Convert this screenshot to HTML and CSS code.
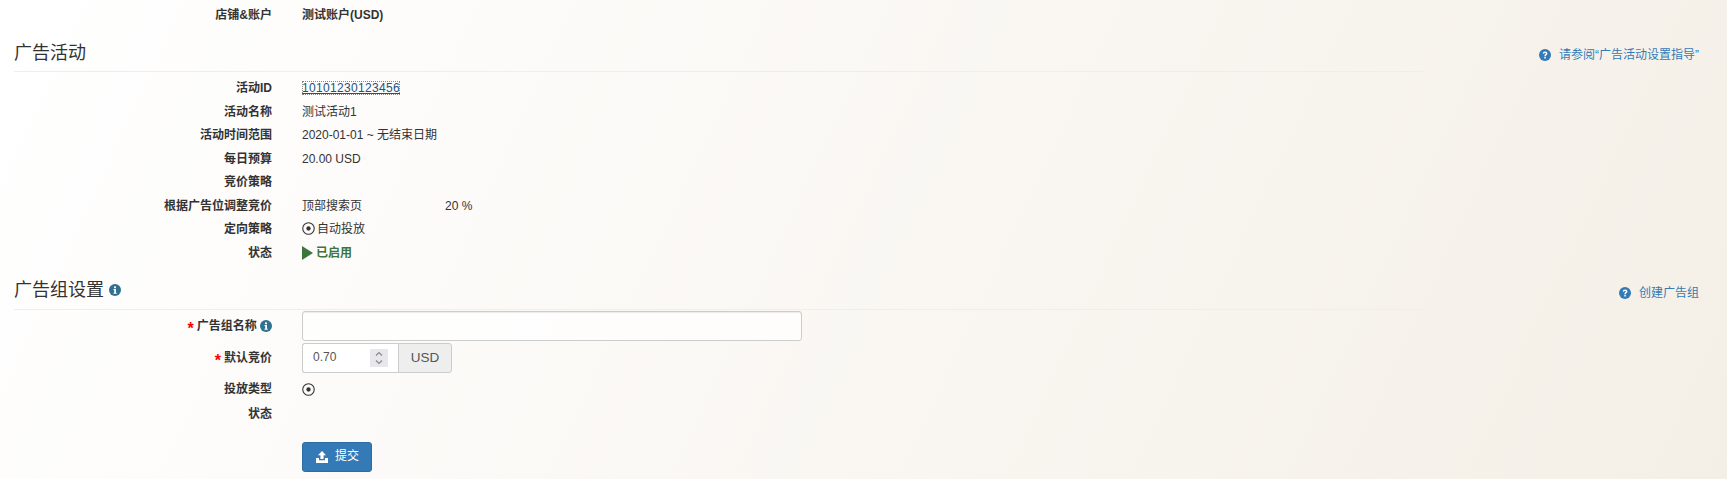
FILE: index.html
```html
<!DOCTYPE html>
<html lang="zh-CN">
<head>
  <meta charset="UTF-8" />
  <meta name="viewport" content="width=device-width, initial-scale=1.0" />
  <title>广告组设置</title>
  <link rel="stylesheet" href="styles.css">
</head>
<body>
  <svg class="defs" width="0" height="0" aria-hidden="true">
    <symbol id="icon-info" viewBox="0 0 12 12">
      <circle cx="6" cy="6" r="6" fill="currentColor" />
      <rect x="5" y="2.4" width="2" height="1.8" fill="#fff" />
      <path d="M4.5 5.1h2.5v3.6h.7v1h-3.200v-1h.7v-2.600h-.7z" fill="#fff" />
    </symbol>
    <symbol id="icon-help" viewBox="0 0 12 12">
      <circle cx="6" cy="6" r="6" fill="currentColor" />
      <path d="M3.8 4.6c0-1.4 1-2.200 2.300-2.200s2.300.8 2.300 2c0 1.500-1.600 1.600-1.600 2.800H5.300c0-1.800 1.500-1.900 1.500-2.700 0-.4-.3-.7-.8-.7-.5 0-.8.3-.9.9z" fill="#fff" />
      <rect x="5.3" y="7.900" width="1.500" height="1.600" fill="#fff" />
    </symbol>
    <symbol id="icon-radio" viewBox="0 0 12 12">
      <circle cx="6" cy="6" r="5.300" fill="none" stroke="currentColor" stroke-width="1" />
      <circle cx="6" cy="6" r="2" fill="currentColor" />
    </symbol>
  </svg>

  <div class="row row-first">
    <div class="row-label">店铺&amp;账户</div>
    <div class="row-value strong">测试账户(USD)</div>
  </div>

  <div class="section-head">
    <h3>广告活动</h3>
    <a class="help-link"><svg class="icon"><use href="#icon-help" /></svg>请参阅“广告活动设置指导”</a>
  </div>

  <div class="row row-after-head">
    <div class="row-label">活动ID</div>
    <div class="row-value"><a class="id-link">10101230123456</a></div>
  </div>
  <div class="row">
    <div class="row-label">活动名称</div>
    <div class="row-value">测试活动1</div>
  </div>
  <div class="row">
    <div class="row-label">活动时间范围</div>
    <div class="row-value">2020-01-01 ~ 无结束日期</div>
  </div>
  <div class="row">
    <div class="row-label">每日预算</div>
    <div class="row-value">20.00 USD</div>
  </div>
  <div class="row">
    <div class="row-label">竞价策略</div>
    <div class="row-value"></div>
  </div>
  <div class="row">
    <div class="row-label">根据广告位调整竞价</div>
    <div class="row-value"><span class="placement">顶部搜索页</span>20 %</div>
  </div>
  <div class="row">
    <div class="row-label">定向策略</div>
    <div class="row-value"><svg class="icon radio"><use href="#icon-radio" /></svg>自动投放</div>
  </div>
  <div class="row">
    <div class="row-label">状态</div>
    <div class="row-value enabled"><span class="play"></span>已启用</div>
  </div>

  <div class="section-head section-second">
    <h3>广告组设置 <svg class="icon title-info"><use href="#icon-info" /></svg></h3>
    <a class="help-link"><svg class="icon"><use href="#icon-help" /></svg>创建广告组</a>
  </div>

  <div class="row row-form">
    <label class="row-label"><span class="req">*</span>广告组名称 <svg class="icon label-info"><use href="#icon-info" /></svg></label>
    <div class="row-value"><input class="text-input" type="text" /></div>
  </div>
  <div class="row row-form">
    <label class="row-label"><span class="req">*</span>默认竞价</label>
    <div class="row-value">
      <div class="input-group">
        <div class="number-box">
          0.70
          <span class="spinner">
            <svg width="8" height="14" viewBox="0 0 8 14"><path d="M1 4.500 4 1.500 7 4.500M1 9.500 4 12.500 7 9.500" fill="none" stroke="#8a8a8a" stroke-width="1.200" /></svg>
          </span>
        </div>
        <span class="addon">USD</span>
      </div>
    </div>
  </div>
  <div class="row row-type">
    <div class="row-label">投放类型</div>
    <div class="row-value"><svg class="icon radio"><use href="#icon-radio" /></svg></div>
  </div>
  <div class="row row-status">
    <div class="row-label">状态</div>
    <div class="row-value"></div>
  </div>

  <div class="row row-submit">
    <div class="row-label"></div>
    <div class="row-value">
      <button class="btn-submit" type="button">
        <svg width="14" height="12" viewBox="0 0 14 12"><path d="M7 0 11 4.200H8.600V8H5.400V4.200H3zM1 7h3v2.200h6V7h3v5H1z" fill="#fff" /></svg>
        提交
      </button>
    </div>
  </div>
</body>
</html>
```

FILE: styles.css
```css
html, body {
  height: 100%;
}
body {
  margin: 0;
  padding: 0;
  overflow: hidden;
  font-family: "Liberation Sans", "Noto Sans CJK SC", sans-serif;
  font-size: 12px;
  line-height: 17px;
  color: #333;
  background: linear-gradient(115deg, #ffffff 0%, #fbf9f6 40%, #f4efe6 100%);
}
.defs {
  position: absolute;
}
.icon {
  width: 12px;
  height: 12px;
  display: inline-block;
  vertical-align: -2px;
}

/* rows */
.row {
  display: flex;
  height: 23.5px;
  align-items: center;
}
.row-first {
  margin-top: 4px;
}
.row-after-head {
  margin-top: 5.5px;
}
.row-label {
  width: 272px;
  flex: none;
  text-align: right;
  font-weight: bold;
}
.row-value {
  margin-left: 30px;
}
.strong {
  font-weight: bold;
}
.id-link {
  display: inline-block;
  line-height: 14px;
  color: #23527c;
  text-decoration: underline;
  letter-spacing: 0.33px;
  outline: 1px dotted #888;
  outline-offset: -1px;
}
.placement {
  display: inline-block;
  width: 143px;
}
.radio {
  width: 13px;
  height: 13px;
  margin-right: 2px;
  color: #333;
}
.enabled {
  color: #3c763d;
  font-weight: bold;
}
.play {
  display: inline-block;
  width: 0;
  height: 0;
  margin-right: 3px;
  border-left: 11px solid #3c763d;
  border-top: 7px solid transparent;
  border-bottom: 7px solid transparent;
  vertical-align: -3px;
}

/* section titles */
.section-head {
  position: relative;
  margin: 7px 303px 0 14px;
  height: 36px;
  border-bottom: 1px solid #eeeeee;
}
.section-second {
  margin-top: 3.5px;
  height: 40px;
}
.section-head h3 {
  margin: 0;
  padding-top: 8px;
  font-size: 18px;
  line-height: 20px;
  font-weight: normal;
}
.section-second h3 {
  padding-top: 11px;
}
.title-info {
  color: #31708f;
  vertical-align: 0;
}
.help-link {
  position: absolute;
  top: 12px;
  right: -275px;
  color: #337ab7;
}
.section-second .help-link {
  top: 16px;
}
.help-link .icon {
  margin-right: 8px;
}

/* form */
.row-form {
  height: 30px;
  margin-top: 2px;
}
.row-form .row-label {
  margin-top: 3px;
}
.section-second + .row-form {
  margin-top: 1px;
}
.req {
  color: #f00;
  font-size: 16px;
  font-weight: bold;
  margin-right: 3px;
  vertical-align: -4px;
}
.label-info {
  color: #31708f;
}
.text-input {
  display: block;
  box-sizing: border-box;
  width: 500px;
  height: 30px;
  padding: 5px 10px;
  border: 1px solid #ccc;
  border-radius: 3px;
  box-shadow: inset 0 1px 1px rgba(0, 0, 0, 0.075);
  background: rgba(255, 255, 255, 0.7);
}
.input-group {
  display: flex;
  width: 150px;
  height: 30px;
}
.number-box {
  flex: 1;
  display: flex;
  align-items: center;
  justify-content: space-between;
  padding: 0 10px;
  border: 1px solid #ccc;
  border-right: 0;
  border-radius: 3px 0 0 3px;
  background: #fff;
  color: #555;
}
.spinner {
  display: flex;
  align-items: center;
  justify-content: center;
  width: 18px;
  height: 18px;
  background: #e8e8ec;
}
.addon {
  width: 52px;
  display: flex;
  align-items: center;
  justify-content: center;
  border: 1px solid #ccc;
  border-radius: 0 3px 3px 0;
  background: #eeeeee;
  color: #555;
  font-size: 13.5px;
}
.row-type {
  height: 23px;
  margin-top: 5px;
}
.row-type .radio {
  display: block;
  margin: 0;
}
.row-status {
  height: 26px;
  margin-top: 1px;
}
.row-submit {
  height: 30px;
  margin-top: 14px;
}
.btn-submit {
  display: flex;
  align-items: center;
  justify-content: center;
  gap: 6px;
  box-sizing: border-box;
  width: 70px;
  height: 30px;
  padding: 0;
  border: 1px solid #2e6da4;
  border-radius: 3px;
  background: #337ab7;
  color: #fff;
  font: inherit;
}
```
